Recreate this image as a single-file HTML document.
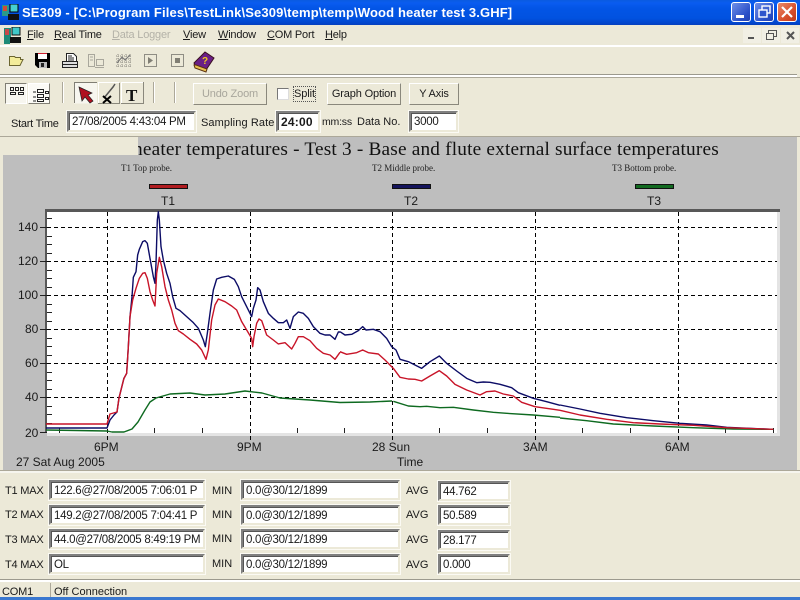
<!DOCTYPE html>
<html><head><meta charset="utf-8"><style>
html,body{margin:0;padding:0}
body{width:800px;height:600px;overflow:hidden;position:relative;background:#ece9d8;font-family:"Liberation Sans",sans-serif;font-size:11px;color:#1a1a1a}
.a,.t{position:absolute}
.t{white-space:nowrap;line-height:14px}
.c{font-size:12px}
.s{font-size:11px;letter-spacing:-.2px}
.l{letter-spacing:-.2px}
.in{position:absolute;box-sizing:border-box;background:#fff;border:2px solid;border-color:#808080 #ece9d8 #ece9d8 #808080;box-shadow:0 0 0 1px #fbfaf4,inset 1px 1px 0 #555;padding:2px 0 0 3px;line-height:14px;white-space:nowrap;overflow:hidden;font-size:11.5px;letter-spacing:-.28px}
.btn{position:absolute;box-sizing:border-box;background:#ece9d8;border:1px solid;border-color:#fff #8a887c #8a887c #fff;text-align:center;font-size:11px;letter-spacing:-.15px;line-height:20px;white-space:nowrap}
.tb{position:absolute;top:2px;width:20px;height:20px;box-sizing:border-box;border:1px solid #fff;border-radius:3px;background:linear-gradient(135deg,#6f8fe8,#2a50c8 70%,#2040b0)}
.mdi{position:absolute;top:28px;width:18px;height:15px;background:#f1efe4}
</style></head><body>
<div class="a" style="left:0;top:0;width:800px;height:25px;background:linear-gradient(180deg,#0a5be0 0,#0a5cf0 3px,#0355e6 8px,#0152e0 18px,#0243c8 24px,#0a3fb8 25px)"></div>
<svg class="a" style="left:2px;top:4px" width="17" height="17"><rect x="0" y="1" width="7" height="11" fill="#2a9a8a"/><rect x="1" y="2" width="4" height="5" fill="#d04a3a"/><rect x="8" y="0" width="8" height="8" fill="#46d0d0" stroke="#000"/><rect x="6" y="10" width="11" height="6" fill="#111"/></svg>
<div class="t" style="left:22px;top:5px;color:#fff;font-size:13px;font-weight:bold;letter-spacing:.13px;line-height:15px">SE309 - [C:\Program Files\TestLink\Se309\temp\temp\Wood heater test 3.GHF]</div>
<div class="tb" style="left:731px"><div class="a" style="left:4px;top:12px;width:8px;height:3px;background:#fff"></div></div>
<div class="tb" style="left:754px"><svg class="a" style="left:3px;top:2px" width="13" height="14" fill="none" stroke="#fff" stroke-width="1.4"><rect x="4" y="1" width="8" height="7"/><rect x="1" y="5" width="8" height="7" fill="#2f55cc"/></svg></div>
<div class="tb" style="left:777px;background:linear-gradient(135deg,#e88a6a,#d8502c 60%,#c03a18)"><svg class="a" style="left:3px;top:3px" width="12" height="12" stroke="#fff" stroke-width="2.2"><path d="M1 1L11 11M11 1L1 11"/></svg></div>

<svg class="a" style="left:4px;top:27px" width="17" height="17"><rect width="7" height="14" y="1" fill="#1d8a78"/><rect x="1" y="2" width="4" height="6" fill="#c84a4a"/><rect x="8" y="0" width="8" height="8" fill="#40c8c8" stroke="#111"/><rect x="6" y="10" width="11" height="6" fill="#111"/><rect x="0" y="15" width="6" height="2" fill="#1d8a78"/></svg>
<div class="t s" style="left:27px;top:28px"><u>F</u>ile</div>
<div class="t s" style="left:54px;top:28px"><u>R</u>eal Time</div>
<div class="t s" style="left:112px;top:28px;color:#b4b2a8"><u>D</u>ata Logger</div>
<div class="t s" style="left:183px;top:28px"><u>V</u>iew</div>
<div class="t s" style="left:218px;top:28px"><u>W</u>indow</div>
<div class="t s" style="left:267px;top:28px"><u>C</u>OM Port</div>
<div class="t s" style="left:325px;top:28px"><u>H</u>elp</div>
<div class="mdi" style="left:743px"><div class="a" style="left:5px;top:9px;width:6px;height:2px;background:#555"></div></div>
<div class="mdi" style="left:762px"><svg class="a" style="left:4px;top:2px" width="11" height="11" fill="#f1efe4" stroke="#555"><rect x="2.5" y=".5" width="8" height="6"/><rect x=".5" y="3.5" width="7" height="6"/></svg></div>
<div class="mdi" style="left:781px"><svg class="a" style="left:5px;top:3px" width="9" height="9" stroke="#555" stroke-width="2"><path d="M1 1L8 8M8 1L1 8"/></svg></div>
<div class="a" style="left:0;top:45px;width:800px;height:2px;background:#fff"></div>

<svg class="a" style="left:0;top:47px" width="225" height="28">
<path d="M9.500 9.500h5l1 1h5v2h2.500l-3 6h-10.500z" fill="#f3ec9a" stroke="#6b6530"/>
<path d="M35 6h15v15H38l-3-3z" fill="#000"/><rect x="38" y="6" width="9" height="6" fill="#fff"/><rect x="38" y="6" width="9" height="1" fill="#d02030"/><rect x="39" y="15" width="8" height="6" fill="#bbb"/><rect x="41" y="16" width="3" height="4" fill="#222"/>
<path d="M66.500 6.500h7l3 3v5H66.500z" fill="#fff" stroke="#222"/><path d="M68 9h4M68 11h6M68 13h6" stroke="#222"/><path d="M62.500 14.500h15v6h-15z" fill="#ddd" stroke="#222"/><path d="M63 17.500h14" stroke="#222"/>
<g fill="none" stroke="#a9a79c"><rect x="88.500" y="7.500" width="6" height="12"/><rect x="96.500" y="12.500" width="7" height="6"/><path d="M95 20.500h9M90 10h3M90 13h3"/></g>
<g fill="none" stroke="#8f8d84"><path d="M116 9h15M116 12h15M116 15h15M116 19h15M118 7v14M122 7v14M126 7v14M130 7v14" stroke-dasharray="1 1"/><path d="M117 16l5-6 3 3 5-5" stroke="#777"/></g>
<rect x="144.500" y="7.500" width="12" height="12" fill="#ece9d8" stroke="#8f8d84"/><path d="M148 10l5 3.500-5 3.500z" fill="#807e74"/>
<rect x="171.500" y="7.500" width="12" height="12" fill="#ece9d8" stroke="#8f8d84"/><rect x="175" y="11" width="5" height="5" fill="#807e74"/>
<path d="M194 16L205 5l9 6-8 12-11-5z" fill="#6a1f86" stroke="#3b1020"/><path d="M194 18l1 3 11 4 1-3-11-4z" fill="#e8c050" stroke="#5a3010"/><text x="202" y="17" font-size="10" font-weight="bold" fill="#f0c820" font-family="Liberation Sans">?</text>
</svg>

<div class="a" style="left:0;top:74px;width:797px;height:1px;background:#9c9a8e"></div>
<div class="a" style="left:0;top:75px;width:797px;height:2px;background:#fff"></div>
<div class="a" style="left:0;top:77px;width:800px;height:1px;background:#aca899"></div>

<div class="a" style="left:5px;top:83px;width:22px;height:21px;box-sizing:border-box;background:#f7f6ef;border:1px solid;border-color:#807e74 #fff #fff #807e74"></div>
<div class="a" style="left:28px;top:83px;width:22px;height:21px;box-sizing:border-box;background:#fbfaf5;border:1px solid;border-color:#fff #807e74 #807e74 #fff"></div>
<svg class="a" style="left:0;top:78px" width="190" height="30">
<g fill="none" stroke="#222"><path d="M10.500 9.500h3v3h-3zM15.500 9.500h3v3h-3zM20.500 9.500h3v3h-3zM10.500 14.500h5v2h-5zM18.500 14.500h5v2h-5z"/><path d="M37.500 11.500h6v3h-6zM37.500 16.500h6v3h-6zM37.500 21.500h6v2h-6zM33 14h3M33 19h3M33 23h3M45.500 13.500h3v2h-3zM45.500 19.500h3v2h-3z"/></g>
<path d="M62.500 4v21" stroke="#aca899"/><path d="M63.500 4v21" stroke="#fff"/>
<rect x="74" y="4.500" width="23" height="21" fill="#f7f6ef"/><path d="M74.500 25V4.500H97" stroke="#807e74" fill="none"/>
<path d="M79 9l13 6-4 2 5 6-3 2-5-6-3 4z" fill="#b01020" stroke="#222" stroke-width=".7"/>
<path d="M98.500 25V4.500H119M143 4.500H121.500V25" fill="none" stroke="#fff"/><path d="M119.500 5v20.500H98M143.500 4v21.500H121" fill="none" stroke="#8a887c"/>
<path d="M104 20l9-11 2-3" stroke="#555" stroke-width="1.500" fill="none"/><path d="M103 18l8 7M111 18l-8 7" stroke="#000" stroke-width="2"/>
<text x="126" y="23" font-family="Liberation Serif" font-weight="bold" font-size="17" fill="#111">T</text>
<path d="M153.500 4v21M174.500 4v21" stroke="#aca899"/><path d="M154.500 4v21M175.500 4v21" stroke="#fff"/>
</svg>
<div class="btn" style="left:193px;top:83px;width:74px;height:22px;color:#a8a69c">Undo Zoom</div>
<div class="a" style="left:277px;top:88px;width:12px;height:12px;box-sizing:border-box;background:#fff;border:1px solid;border-color:#777 #ddd #ddd #777"></div>
<div class="t" style="left:294px;top:87px;outline:1px dotted #555;padding:0;letter-spacing:-.1px;width:21px">Split</div>
<div class="btn" style="left:327px;top:83px;width:74px;height:22px">Graph Option</div>
<div class="btn" style="left:409px;top:83px;width:50px;height:22px">Y Axis</div>

<div class="t" style="left:11px;top:117px;letter-spacing:-.25px">Start Time</div>
<div class="in" style="left:67px;top:111px;width:129px;height:21px">27/08/2005 4:43:04 PM</div>
<div class="t" style="left:201px;top:116px;letter-spacing:.1px">Sampling Rate</div>
<div class="in" style="left:276px;top:111px;width:44px;height:21px;font-weight:bold;font-size:12px;letter-spacing:.2px">24:00</div>
<div class="t" style="left:322px;top:115px;font-size:10.5px;letter-spacing:-.2px">mm:ss</div>
<div class="t" style="left:357px;top:115px">Data No.</div>
<div class="in" style="left:409px;top:111px;width:49px;height:21px">3000</div>
<div class="a" style="left:0;top:136px;width:800px;height:1px;background:#aca899"></div>

<div class="a" style="left:3px;top:137px;width:794px;height:333px;background:#bebebe"></div>
<div class="t" style="left:133px;top:139px;font-family:'Liberation Serif',serif;font-size:19.3px;line-height:21px;color:#111;letter-spacing:.19px">heater temperatures - Test 3 - Base and flute external surface temperatures</div>
<div class="a" style="left:3px;top:137px;width:135px;height:18px;background:#ece9d8"></div>
<div class="t" style="left:121px;top:161px;font-family:'Liberation Serif',serif;font-size:9px;color:#222">T1 Top probe.</div>
<div class="t" style="left:372px;top:161px;font-family:'Liberation Serif',serif;font-size:9px;color:#222">T2 Middle probe.</div>
<div class="t" style="left:612px;top:161px;font-family:'Liberation Serif',serif;font-size:9px;color:#222">T3 Bottom probe.</div>
<div class="a" style="left:149px;top:184px;width:39px;height:5px;box-sizing:border-box;background:#b01c20;border:1px solid #111"></div>
<div class="a" style="left:392px;top:184px;width:39px;height:5px;box-sizing:border-box;background:#14145c;border:1px solid #111"></div>
<div class="a" style="left:635px;top:184px;width:39px;height:5px;box-sizing:border-box;background:#126a20;border:1px solid #111"></div>
<div class="t c" style="left:161px;top:194px">T1</div>
<div class="t c" style="left:404px;top:194px">T2</div>
<div class="t c" style="left:647px;top:194px">T3</div>

<svg class="a" style="left:0;top:0" width="800" height="470">
<rect x="47" y="212" width="733" height="224" fill="#e4e4e4"/>
<rect x="47" y="212" width="730" height="221" fill="#fff"/>
<rect x="45" y="209" width="735" height="3" fill="#585858"/>
<rect x="45" y="209" width="2" height="224" fill="#585858"/>
<g stroke="#000" stroke-dasharray="4 3" fill="none">
<path d="M47 227.500H777M47 261.500H777M47 295.500H777M47 329.500H777M47 363.500H777M47 397.500H777"/>
<path d="M107.500 212V440M250.500 212V440M392.500 212V440M535.500 212V440M678.500 212V440"/>
</g>
<g stroke="#222" fill="none">
<path d="M47 218.500h5M47 236.500h5M47 244.500h5M47 253.500h5M47 270.500h5M47 278.500h5M47 287.500h5M47 304.500h5M47 312.500h5M47 321.500h5M47 338.500h5M47 346.500h5M47 355.500h5M47 372.500h5M47 380.500h5M47 389.500h5M47 406.500h5M47 414.500h5M47 423.500h5"/>
<path d="M40 227.500h7M40 261.500h7M40 295.500h7M40 329.500h7M40 363.500h7M40 397.500h7M40 432.500h7"/>
<path d="M59.500 428v5M154.500 428v5M202.500 428v5M297.500 428v5M344.500 428v5M439.500 428v5M487.500 428v5M582.500 428v5M630.500 428v5M725.500 428v5M773.500 428v5"/>
</g>
<g fill="none" stroke-width="1.4" stroke-linejoin="round">
<g stroke="#0c0c66">
<polyline points="46,428 107,428 110,420 114,415 117,412 119,398 124,378"/>
<polyline vector-effect="non-scaling-stroke" transform="translate(100,200) scale(.33333)" points="72,535 80,520 85,440 90,350 96,290 100,232 108,215 113,165 118,148 128,125 135,122 142,130 150,175 160,230 165,250 168,190 172,60 175,35 178,60 183,140 190,180 200,220 210,250 218,290 228,325 240,332 260,350 280,368 295,385 310,420 316,440 322,400 330,340 340,270 350,237 365,232 385,228 403,238 415,260 425,290 440,320 455,350 460,325 468,300 473,263 480,270 490,305 505,340 520,355 535,368 550,368 560,360 570,385 580,350 595,336 610,340 625,355 640,380 660,400 675,405 690,405 705,418 715,396 720,396"/>
<polyline vector-effect="non-scaling-stroke" transform="translate(340,300) scale(.33333)" points="0,95 15,105 35,103 55,92 68,80 78,90 100,88 120,95 140,115 155,140 168,150 180,178 205,185 225,195 245,205 270,185 298,168 320,190 350,213 380,235 410,248 430,246 450,247 480,253 515,263 535,278 580,295 620,305 660,316"/>
<polyline vector-effect="non-scaling-stroke" transform="translate(560,330) scale(.33333)" points="0,225 60,237 120,250 200,263 280,272 360,280 440,285 500,292 640,298"/>
</g>
<g stroke="#0e6a20">
<polyline points="46,430 107,431 112,432 124,432 132,429 138,422 145,410 150,402 156,398 170,394 190,393 205,395 225,394 245,391 262,393 280,398 310,400 340,402.500 370,402 392,401"/>
<polyline vector-effect="non-scaling-stroke" transform="translate(340,300) scale(.33333)" points="160,304 205,318 240,320 260,319 300,323 340,322 400,330 460,337 500,340 580,345 660,352"/>
<polyline vector-effect="non-scaling-stroke" transform="translate(560,330) scale(.33333)" points="0,264 80,272 160,282 280,288 400,293 520,297 640,298"/>
</g>
<g stroke="#c81428">
<polyline points="46,424 107,424 110,414 117,412 119,398 124,378"/>
<polyline vector-effect="non-scaling-stroke" transform="translate(100,200) scale(.33333)" points="72,535 80,520 85,440 90,350 98,300 108,265 118,235 128,220 135,218 142,235 150,275 158,300 165,318 170,220 178,172 185,200 195,260 205,300 215,330 225,370 235,392 250,402 270,418 290,432 305,450 318,478 325,450 335,360 345,315 355,297 375,305 395,318 410,330 425,365 440,390 455,415 458,440 462,410 470,370 477,357 485,362 500,405 520,420 535,432 555,428 575,447 585,430 595,410 610,410 630,422 650,445 670,460 690,465 705,478 720,457"/>
<polyline vector-effect="non-scaling-stroke" transform="translate(340,300) scale(.33333)" points="0,155 20,163 50,158 68,150 85,158 115,162 135,180 160,205 180,232 205,237 225,238 245,243 270,228 298,212 320,228 345,253 380,270 420,285 440,275 465,273 490,282 520,288 545,307 585,320 640,328 660,331"/>
<polyline vector-effect="non-scaling-stroke" transform="translate(560,330) scale(.33333)" points="0,241 60,255 140,268 220,278 300,282 400,286 500,293 640,298"/>
</g>
</g>
</svg>

<div class="t c" style="left:18px;top:220px">140</div>
<div class="t c" style="left:18px;top:254px">120</div>
<div class="t c" style="left:18px;top:288px">100</div>
<div class="t c" style="left:25px;top:322px">80</div>
<div class="t c" style="left:25px;top:356px">60</div>
<div class="t c" style="left:25px;top:390px">40</div>
<div class="t c" style="left:25px;top:426px">20</div>
<div class="t c" style="left:94px;top:440px">6PM</div>
<div class="t c" style="left:237px;top:440px">9PM</div>
<div class="t c" style="left:372px;top:440px">28 Sun</div>
<div class="t c" style="left:523px;top:440px">3AM</div>
<div class="t c" style="left:665px;top:440px">6AM</div>
<div class="t c" style="left:16px;top:455px">27 Sat Aug 2005</div>
<div class="t c" style="left:397px;top:455px">Time</div>

<div class="a" style="left:0;top:470px;width:800px;height:1px;background:#aca899"></div>
<div class="a" style="left:0;top:471px;width:800px;height:2px;background:#f6f5ee"></div>

<div class="t l" style="left:5px;top:484px">T1 MAX</div>
<div class="t l" style="left:5px;top:508px">T2 MAX</div>
<div class="t l" style="left:5px;top:533px">T3 MAX</div>
<div class="t l" style="left:5px;top:558px">T4 MAX</div>
<div class="in" style="left:49px;top:480px;width:156px;height:20px">122.6@27/08/2005 7:06:01 P</div>
<div class="in" style="left:49px;top:505px;width:156px;height:20px">149.2@27/08/2005 7:04:41 P</div>
<div class="in" style="left:49px;top:529px;width:156px;height:20px">44.0@27/08/2005 8:49:19 PM</div>
<div class="in" style="left:49px;top:554px;width:156px;height:20px">OL</div>
<div class="t" style="left:212px;top:484px">MIN</div>
<div class="t" style="left:212px;top:508px">MIN</div>
<div class="t" style="left:212px;top:532px">MIN</div>
<div class="t" style="left:212px;top:557px">MIN</div>
<div class="in" style="left:241px;top:480px;width:159px;height:20px">0.0@30/12/1899</div>
<div class="in" style="left:241px;top:505px;width:159px;height:20px">0.0@30/12/1899</div>
<div class="in" style="left:241px;top:529px;width:159px;height:20px">0.0@30/12/1899</div>
<div class="in" style="left:241px;top:554px;width:159px;height:20px">0.0@30/12/1899</div>
<div class="t" style="left:406px;top:484px">AVG</div>
<div class="t" style="left:406px;top:508px">AVG</div>
<div class="t" style="left:406px;top:533px">AVG</div>
<div class="t" style="left:406px;top:558px">AVG</div>
<div class="in" style="left:438px;top:481px;width:72px;height:20px">44.762</div>
<div class="in" style="left:438px;top:505px;width:72px;height:20px">50.589</div>
<div class="in" style="left:438px;top:530px;width:72px;height:20px">28.177</div>
<div class="in" style="left:438px;top:554px;width:72px;height:20px">0.000</div>

<div class="a" style="left:0;top:579px;width:800px;height:1px;background:#9c9a8e"></div>
<div class="a" style="left:0;top:580px;width:800px;height:2px;background:#fff"></div>
<div class="a" style="left:50px;top:583px;width:1px;height:14px;background:#aca899"></div>
<div class="t l" style="left:2px;top:585px">COM1</div>
<div class="t" style="left:54px;top:585px">Off Connection</div>
<div class="a" style="left:0;top:597px;width:800px;height:3px;background:#3a78d0"></div>
</body></html>
